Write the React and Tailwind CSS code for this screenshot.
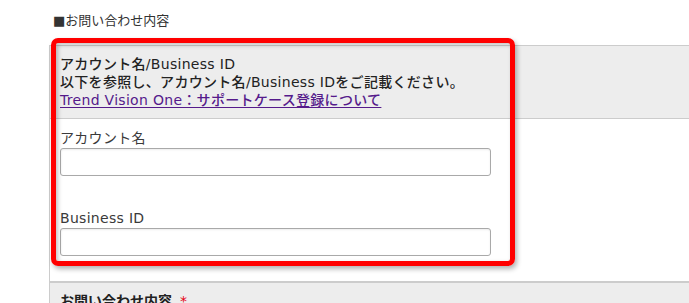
import React from 'react';

const font = { fontFamily: '"DejaVu Sans", "Noto Sans CJK JP", sans-serif' };

const Field = ({ label, className = '' }) => (
  <div className={className}>
    <div className="text-[14px] leading-[18px] tracking-[0.3px] text-[#3a3a3a]">{label}</div>
    <input
      type="text"
      className="mt-[1px] block h-[28px] w-[431px] rounded-[3px] border border-[#a9a9a9] bg-white shadow-[inset_0_1px_2px_rgba(0,0,0,0.08)] outline-none"
    />
  </div>
);

const App = () => {
  return (
    <div
      className="relative h-[303px] w-[689px] overflow-hidden bg-white text-[#333]"
      style={font}
    >
      {/* Section title */}
      <div className="pl-[53px] pt-[12px] text-[13px] leading-[17px] text-[#333]">
        ■お問い合わせ内容
      </div>

      {/* Form table */}
      <div className="ml-[49px] mt-[16px] border-l border-t border-[#cccccc]">
        <div className="border-b border-[#cccccc] bg-[#ededed] px-[10px] py-[9px] text-[14px] leading-[18px] tracking-[0.3px]">
          <div className="font-medium text-[#222]">アカウント名/Business ID</div>
          <div className="font-medium text-[#222]">以下を参照し、アカウント名/Business IDをご記載ください。</div>
          <a href="#" className="font-medium text-[#551a8b] underline underline-offset-2">
            Trend Vision One：サポートケース登録について
          </a>
        </div>

        <div className="h-[162px] bg-white px-[10px] pt-[10px]">
          <Field label="アカウント名" />
          <Field label="Business ID" className="mt-[33px]" />
        </div>

        <div className="border-t-2 border-[#cccccc] bg-[#ededed] px-[10px] pt-[9px] text-[14px] leading-[18px]">
          <span className="font-semibold text-[#222]">お問い合わせ内容</span>
          <span className="ml-[8px] text-[#e60012]">*</span>
        </div>
      </div>

      {/* Highlight annotation */}
      <div className="pointer-events-none absolute left-[51px] top-[38px] h-[228px] w-[464px] rounded-[7px] border-[5px] border-[#ff0000] shadow-[2px_3px_5px_rgba(0,0,0,0.3),inset_2px_2px_4px_rgba(0,0,0,0.25)]" />
    </div>
  );
};

export default App;
